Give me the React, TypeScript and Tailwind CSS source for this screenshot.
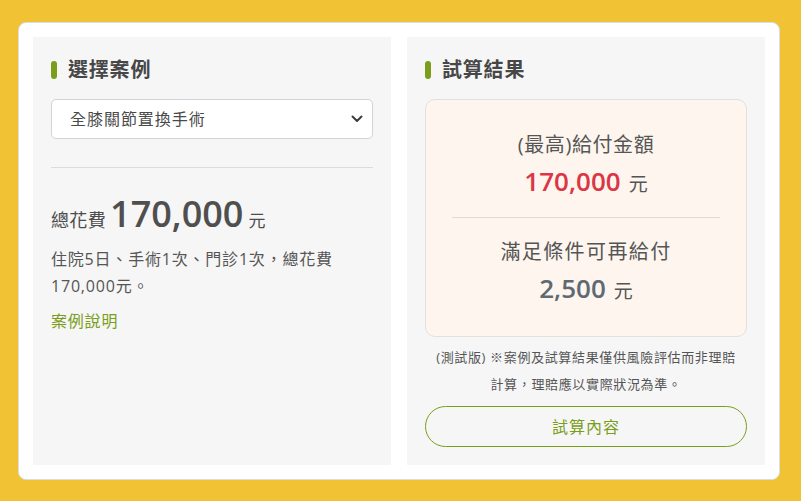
import { useState } from 'react';

const font = "font-['Open_Sans','Noto_Sans_CJK_TC',sans-serif]";

function Heading({ children }: { children: string }) {
  return (
    <div className="flex h-[28px] items-center gap-[11px]">
      <span className="h-[18px] w-[6px] rounded-full bg-[#7a9e1b]" />
      <h2 className="text-[20px] font-bold leading-[28px] tracking-[0.04em] text-[#474747]">{children}</h2>
    </div>
  );
}

export default function App() {
  const [pick, setPick] = useState('全膝關節置換手術');

  return (
    <div className={`h-[501px] w-[801px] overflow-hidden bg-[#f1c233] pl-[18px] pt-[22px] ${font}`}>
      <div className="flex h-[458px] w-[762px] gap-[16px] rounded-[8px] border border-[#d9dce1] bg-white p-[14px]">
        {/* 選擇案例 */}
        <div className="flex-1 bg-[#f6f6f6] px-[18px] pt-[19px]">
          <Heading>選擇案例</Heading>
          <div className="relative mt-[15px]">
            <select
              value={pick}
              onChange={(e) => setPick(e.target.value)}
              className="h-[40px] w-full appearance-none rounded-[5px] border border-[#cfd4da] bg-white pl-[18px] text-[16px] tracking-[0.06em] text-[#4a4a4a] outline-none"
            >
              <option>全膝關節置換手術</option>
              <option>全髖關節置換手術</option>
            </select>
            <svg className="pointer-events-none absolute right-[10px] top-[16px]" width="12" height="8" viewBox="0 0 12 8">
              <path d="M1.5 1.5 6 6l4.5-4.5" fill="none" stroke="#3d3d3d" strokeWidth="2" strokeLinecap="round" strokeLinejoin="round" />
            </svg>
          </div>
          <div className="mt-[28px] h-px bg-[#dcdcdc]" />

          <div className="mt-[23px] flex items-baseline text-[#4d4d4d]">
            <span className="text-[18px] tracking-[0.02em]">總花費</span>
            <span className="ml-[4px] text-[36px] font-semibold leading-[46px] text-[#4f4f4f]">170,000</span>
            <span className="ml-[5px] text-[17px]">元</span>
          </div>
          <p className="mt-[9px] text-[16px] leading-[27px] tracking-[0.05em] text-[#555]">
            住院5日、手術1次、門診1次，總花費
            <br />
            170,000元。
          </p>
          <a className="mt-[8px] block text-[16px] leading-[27px] tracking-[0.05em] text-[#7a9e1b]" href="#">
            案例說明
          </a>
        </div>

        {/* 試算結果 */}
        <div className="flex flex-1 flex-col bg-[#f6f6f6] px-[18px] pb-[18px] pt-[19px]">
          <Heading>試算結果</Heading>
          <div className="mt-[15px] flex shrink-0 flex-col items-center rounded-[10px] border border-[#e5e0da] bg-[#fdf5ee] px-[26px] pb-[26px] pt-[30px] text-center">
            <div className="text-[20px] leading-[30px] tracking-[0.03em] text-[#555]">(最高)給付金額</div>
            <div className="mt-[2px] flex items-baseline gap-[8px] leading-[38px]">
              <span className="text-[26px] font-semibold text-[#dc3545]">170,000</span>
              <span className="text-[19px] text-[#555]">元</span>
            </div>
            <div className="mt-[14px] h-px w-full bg-[#e0dad3]" />
            <div className="mt-[19px] text-[20px] leading-[30px] tracking-[0.07em] text-[#555]">滿足條件可再給付</div>
            <div className="mt-[2px] flex items-baseline gap-[8px] leading-[38px]">
              <span className="text-[26px] font-semibold text-[#5f6973]">2,500</span>
              <span className="text-[19px] text-[#555]">元</span>
            </div>
          </div>
          <p className="mt-[7px] shrink-0 text-center text-[13px] leading-[27px] tracking-[0.05em] text-[#555]">
            (測試版) ※案例及試算結果僅供風險評估而非理賠
            <br />
            計算，理賠應以實際狀況為準。
          </p>
          <button className="mt-[8px] h-[41px] w-full shrink-0 rounded-full border border-[#7a9e1b] text-[16px] tracking-[0.06em] text-[#7a9e1b]">
            試算內容
          </button>
        </div>
      </div>
    </div>
  );
}
